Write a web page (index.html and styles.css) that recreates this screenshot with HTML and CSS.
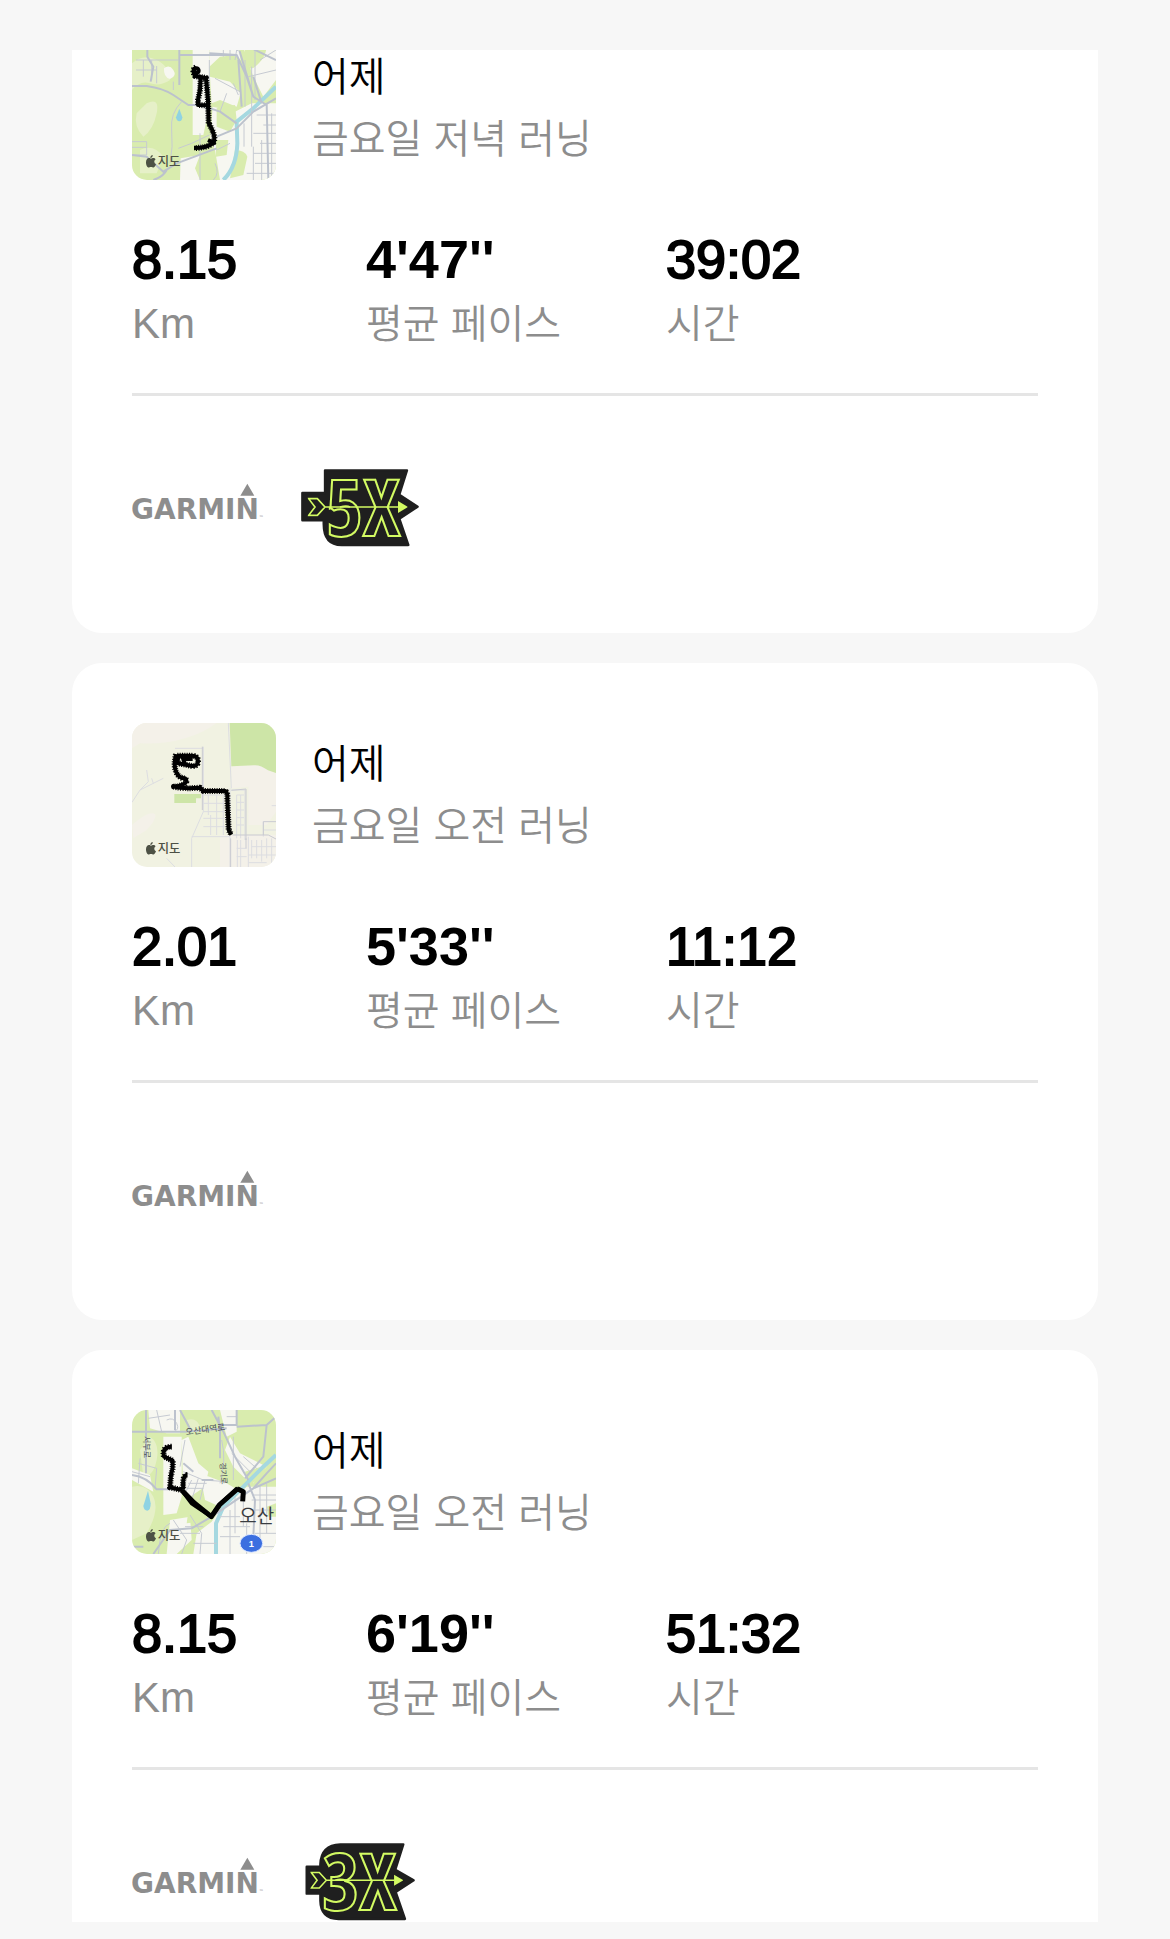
FILE: index.html
```html
<!DOCTYPE html>
<html lang="ko"><head><meta charset="utf-8"/>
<meta name="viewport" content="width=device-width, initial-scale=1.0"/>
<meta name="format-detection" content="telephone=no"/>
<title>러닝 기록</title>
<link rel="stylesheet" href="styles.css">
</head>
<body>

<svg class="defs" aria-hidden="true">
  <symbol id="apple" viewBox="0 0 30 38">
    <path d="M20 0c1 5-3 9-7 9 0-5 3-8 7-9zM15 11c2 0 4-2 7-2 3 0 5 1 7 4-6 4-5 12 1 15-2 5-5 10-8 10-3 0-4-2-7-2s-4 2-7 2C3 38 0 29 0 22 0 14 4 9 9 9c3 0 4 2 6 2z"/>
  </symbol>
  <symbol id="garmin" viewBox="36 41 396 231">
    <path d="M382 85L403 121H361Z"/>
    <text class="brand" x="33" y="190">GARMIN</text>
    <text class="tm" x="417" y="190">™</text>
  </symbol>
  <symbol id="arrow" viewBox="0 0 300 60">
    <path class="line" d="M3 6H29L52 31L29 56H3L22 31ZM52 31H272"/>
    <path class="head" d="M271 13L301 31L271 49Z"/>
  </symbol>
</svg>

<main class="feed">

  <article class="card">
    <header class="run">
      <svg class="map" viewBox="36 -12 432 432" role="img" aria-label="러닝 경로">
        <rect class="land" x="36" y="-12" width="432" height="432"/>
        <g class="pale">
          <path d="M36 70Q70 40 110 60T150 120Q120 140 90 130T36 150ZM80 190Q120 170 110 220T70 290Q40 260 50 220ZM60 330Q100 310 130 350L110 400H60Z"/>
        </g>
        <g class="city">
          <path d="M218 -12H268V200L250 285H218Z"/>
          <path d="M132 85Q148 72 160 90T150 117Q130 112 132 85Z"/>
          <path d="M268 -12H350L362 60L345 45L300 50L268 80ZM372 30L468 -12V120L430 170L400 110ZM270 110L330 125L362 160L350 200L300 180L275 190ZM278 200L345 215L395 190L468 190V420H300L285 330L270 300Z"/>
          <path d="M182 355L240 345L225 385L240 420H180Z"/>
        </g>
        <g class="land">
          <path d="M385 -12H430Q450 30 425 60T390 85L372 40ZM290 205L345 195L350 240L330 275L290 260ZM345 330Q375 330 382 350L370 405L330 415ZM288 300L325 300L320 345L288 350Z"/>
        </g>
        <path class="river" d="M468 140L400 205L350 245L352 310Q350 380 310 420"/>
        <path class="pond" d="M178 206L187 232Q186 244 178 244T168 232Z"/>
        <g class="road small">
          <path d="M48 60H175M70 60V110M95 60V120M48 90H110M110 78V130M160 125V150M268 60V200M285 115L360 155M300 215L320 160M340 130L355 165M185 185Q150 220 155 270T150 370M268 285L215 310L175 325M240 280V420M375 60V200M395 80V320M405 30V180M36 305H80V345H36M36 322H80M410 225H468M430 255H468M400 280H468M420 310H468M400 340H468M405 370H468M380 400H468M400 320V420M425 300V420M455 220V420M372 250V320M290 330L330 310M285 370Q300 400 280 420M330 -12V60M310 -12V50M350 30L345 60M420 60L468 30M385 110L468 90"/>
        </g>
        <g class="road">
          <path d="M36 138H80Q130 145 160 165T205 195H240L300 215L350 250M178 -12V135M82 -12V50L100 80L92 125M178 45H340M36 345L80 350L130 395L170 370L250 340L290 325M100 420Q130 410 140 390M268 40L350 45L380 110L400 170L440 195M345 -12L400 170M350 30L385 20L468 60M290 290L350 265L400 215L468 175M440 190L445 420M355 60L365 200M400 110L425 190"/>
        </g>
        <g class="route">
          <path d="M228 82Q214 90 225 108L258 114L264 180L266 250Q290 290 280 308Q262 324 222 324"/>
          <path d="M242 115Q242 150 234 180V195L264 196M264 300L286 310"/>
          <path class="rough" d="M228 82Q214 90 225 108L258 114L264 180L266 250Q290 290 280 308Q262 324 222 324"/>
          <path class="rough" d="M242 115Q242 150 234 180V195L264 196"/>
          <circle cx="229" cy="92" r="7"/>
        </g>
        <use class="mark" href="#apple" x="78" y="345" width="30" height="38"/>
        <text class="maptext" x="113" y="377">지도</text>
      </svg>
      <div class="info">
        <h2 class="day">어제</h2>
        <p class="name">금요일 저녁 러닝</p>
      </div>
    </header>
    <dl class="stats">
      <div><dd>8.15</dd><dt class="unit">Km</dt></div>
      <div><dd class="pace">4'47''</dd><dt>평균 페이스</dt></div>
      <div><dd>39:02</dd><dt>시간</dt></div>
    </dl>
    <footer class="marks">
      <svg class="garmin" viewBox="36 41 396 231" role="img" aria-label="GARMIN"><use href="#garmin" x="36" y="41" width="396" height="231"/></svg>
      <svg class="badge" viewBox="543 41 354 231" role="img" aria-label="5X">
        <path class="plate" d="M615 45H861L838 118L893 154L838 190L865 269H665Q611 269 611 205V195H547V113H615Z"/>
        <text x="618" y="243">5X</text>
        <path class="line" d="M629 155V163M660 155Q680 150 690 155"/>
        <use href="#arrow" x="563" y="124" width="300" height="60"/>
      </svg>
    </footer>
  </article>

  <article class="card">
    <header class="run">
      <svg class="map" viewBox="36 24 432 432" role="img" aria-label="러닝 경로">
        <rect class="field" x="36" y="24" width="432" height="432"/>
        <g class="sand">
          <path d="M36 24H290Q200 90 60 85L36 100ZM36 330Q80 290 100 295T80 345L40 370ZM334 155L420 150L468 175V290L440 330H385V215L334 220Z"/>
          <path d="M300 360H468V456H300Z"/>
        </g>
        <path class="park" d="M329 24H468V174L444 166Q420 148 400 151L334 154Z"/>
        <path class="park" d="M163 237H243V250H228V264H163Z"/>
        <g class="lane">
          <path d="M325 24L334 220M250 95V290L215 370V456M165 100H250M36 262L60 225L85 200L80 165M60 225L130 190M100 205L95 190M215 365H330M330 220V456M334 225H375V375M350 240V370M362 240V370M250 240H320M250 265H320M250 290H320M250 310H320M250 335H320M265 240V300M290 240V360M310 240V360M272 300V360M350 240H372M350 262H372M350 285H372M350 308H372M350 330H372M352 375V456M362 375V456M385 365V456M395 375V430M410 375V430M425 375V440M440 370V430M455 370V456M350 400H380M350 425H380M395 395H468M385 420H468M385 443H440M140 430L165 456M430 345H468M430 320V365M455 272H468"/>
        </g>
        <g class="lane dark">
          <path d="M334 226L378 222V375M338 360H445L468 372M430 360V320H468M332 370V456M378 370V400M247 95V285"/>
        </g>
        <g class="route">
          <path d="M172 122H218Q235 124 234 140T212 152L175 145M168 118Q160 150 168 170T195 190Q206 200 190 208T162 215Q190 222 240 218L250 228H315Q323 230 322 250L326 345L334 359"/>
          <path class="rough" d="M172 122H218Q235 124 234 140T212 152L175 145M168 118Q160 150 168 170T195 190Q206 200 190 208T162 215Q190 222 240 218L250 228H315Q323 230 322 250L326 345L334 359"/>
          <path d="M175 122L172 150M185 118L195 148M185 132H218"/>
        </g>
        <use class="mark" href="#apple" x="78" y="381" width="30" height="38"/>
        <text class="maptext" x="113" y="413">지도</text>
      </svg>
      <div class="info">
        <h2 class="day">어제</h2>
        <p class="name">금요일 오전 러닝</p>
      </div>
    </header>
    <dl class="stats">
      <div><dd>2.01</dd><dt class="unit">Km</dt></div>
      <div><dd class="pace">5'33''</dd><dt>평균 페이스</dt></div>
      <div><dd>11:12</dd><dt>시간</dt></div>
    </dl>
    <footer class="marks">
      <svg class="garmin" viewBox="36 41 396 231" role="img" aria-label="GARMIN"><use href="#garmin" x="36" y="41" width="396" height="231"/></svg>
    </footer>
  </article>

  <article class="card">
    <header class="run">
      <svg class="map" viewBox="36 30 432 432" role="img" aria-label="러닝 경로">
        <rect class="land" x="36" y="30" width="432" height="432"/>
        <g class="pale">
          <path d="M36 260Q80 250 100 290T80 400L36 420ZM90 110Q120 130 110 180T70 230L60 150ZM200 60Q230 50 240 80L215 95Z"/>
        </g>
        <g class="city">
          <path d="M85 30H180V100H140L90 85ZM130 110H185V290L170 340L130 345ZM185 120L205 110L235 190L265 215L255 260L210 290L190 270ZM300 30H350V95L320 110ZM330 110L360 160L440 200L400 250L375 235L340 200L315 150ZM240 220L320 250L345 265L300 320L255 300ZM300 330L380 260H468V462H220L230 400L275 365ZM36 205L90 225L100 275L36 240ZM150 360L210 350L215 420L170 462H140Z"/>
        </g>
        <g class="land">
          <path d="M245 130L295 125L300 205L270 210L235 180ZM375 215L440 195L430 225L385 260ZM210 300L250 320L240 365L200 370ZM440 320L468 310V350H445Z"/>
        </g>
        <path class="river" d="M468 165L430 200L380 250L310 320L288 370V462"/>
        <path class="pond" d="M84 272L92 310Q92 332 82 332T70 318Z"/>
        <g class="road small">
          <path d="M110 30L125 95M85 55L150 45M140 60Q160 50 170 70T160 95M55 190L110 205L105 265M36 215L90 230M60 175L55 250M155 180V265M190 215L250 240L320 245M215 240L195 280M235 235L215 300M255 240L240 300M205 250H260M200 265H250M195 120L180 200M320 50H350M305 120Q320 180 300 250M340 110V240M335 160L390 215M370 170L410 205M160 360L200 420L185 462M210 345L245 400L240 462M180 400H240M195 380H250M220 430H290M300 350L360 350M310 380H390M300 410H360M330 330V462M345 290V400M370 270V380M420 255V420M440 250V400M395 300H468M400 285H468M390 330H468M405 400H468M430 440H468M380 370V462M150 370Q120 380 115 462"/>
        </g>
        <g class="road">
          <path d="M36 95H195L320 85M78 30V220M36 225Q80 230 110 268H185L220 310L275 350M180 30L215 95M165 30V90M275 30L310 95L345 170L385 240M295 50L300 95V175M350 30V75L300 75M350 80L440 75L468 50M440 75L430 170L375 235M275 350L215 385L150 390L100 462M275 350L400 265L468 235M385 250L405 300L400 410M468 190L440 220L400 265M245 240L280 240M190 190L220 215M36 440H70"/>
        </g>
        <g class="route">
          <path d="M155 140Q125 140 132 170L158 182Q160 205 153 225L150 262L185 270L215 310L274 350L300 312L355 264M202 225Q186 225 190 268"/>
          <path class="rough" d="M155 140Q125 140 132 170L158 182Q160 205 153 225L150 262L185 270M202 225Q186 225 190 268"/>
          <path class="thick" d="M187 272L222 308L274 350L298 315L353 266M352 266L370 275L368 304"/>
        </g>
        <text class="street" transform="translate(198 106) rotate(-8)">오산대역로</text>
        <text class="street side" transform="translate(73 108) rotate(90)">서부로</text>
        <text class="street side" transform="translate(299 188) rotate(85)">경기로</text>
        <text class="place" x="358" y="368">오산</text>
        <ellipse class="shield" cx="394" cy="430" rx="34" ry="27"/>
        <text class="route-no" x="394" y="440">1</text>
        <use class="mark" href="#apple" x="78" y="387" width="30" height="38"/>
        <text class="maptext" x="113" y="419">지도</text>
      </svg>
      <div class="info">
        <h2 class="day">어제</h2>
        <p class="name">금요일 오전 러닝</p>
      </div>
    </header>
    <dl class="stats">
      <div><dd>8.15</dd><dt class="unit">Km</dt></div>
      <div><dd class="pace">6'19''</dd><dt>평균 페이스</dt></div>
      <div><dd>51:32</dd><dt>시간</dt></div>
    </dl>
    <footer class="marks">
      <svg class="garmin" viewBox="36 41 396 231" role="img" aria-label="GARMIN"><use href="#garmin" x="36" y="41" width="396" height="231"/></svg>
      <svg class="badge" viewBox="542 39 354 231" role="img" aria-label="3X">
        <path class="plate" d="M660 43H849L825 119L880 151L826 186L854 267H655Q601 266 600 212V191H559V110H600V103Q602 45 660 43Z"/>
        <text x="606" y="241">3X</text>
        <path class="line" d="M645 151Q660 145 676 151"/>
        <use href="#arrow" x="570" y="120" width="278" height="60"/>
      </svg>
    </footer>
  </article>

</main>

</body>
</html>
```

FILE: styles.css
```css
* {
  box-sizing: border-box;
}
body {
  margin: 0;
  padding: 50px 72px 17px;
  height: 100vh;
  background-color: #f7f7f7;
  color: #000;
  font-family: "Liberation Sans", "Noto Sans CJK KR", sans-serif;
  --sub-color: #8d8d8d;
  --lime: #d3fb63;
}
h2, p, dl, dd, dt {
  margin: 0;
}
.defs {
  display: none;
}

/* scrolled list */
.feed {
  height: 100%;
  overflow: hidden;
}
.card {
  background-color: #fff;
  border-radius: 30px;
  padding: 60px;
  margin-bottom: 30px;
}
.card:first-child {
  margin-top: -74px;
}

.run {
  display: flex;
  align-items: center;
  gap: 36px;
}
.map {
  width: 144px;
  height: 144px;
  border-radius: 15px;
  flex: none;
}
.day, .name, .stats dt {
  font-size: 40px;
  font-weight: 350;
  line-height: 62px;
}
.name, .stats dt {
  color: var(--sub-color);
}

.stats {
  display: grid;
  grid-template-columns: 39fr 50fr 62fr;
  padding: 45px 0 38px;
  border-bottom: 3px solid #e5e5e5;
}
.stats dd {
  font-size: 54px;
  line-height: 68px;
  -webkit-text-stroke: 2px #000;
}
.stats .pace {
  font-weight: bold;
  -webkit-text-stroke: 0;
}
.stats .unit {
  font-size: 42px;
}

.marks {
  display: flex;
  gap: 37px;
  padding: 73px 0 27px;
}
.garmin {
  width: 132px;
  height: 77px;
  fill: var(--sub-color);
}
.brand {
  font: bold 84px "DejaVu Sans", sans-serif;
}
.tm {
  font: 14px "DejaVu Sans", sans-serif;
}
.badge {
  width: 118px;
  height: 77px;
  overflow: visible;
}
.badge text {
  font: bold condensed 236px "Open Sans", sans-serif;
  fill: none;
  stroke: var(--lime);
  stroke-width: 6;
}
.plate {
  fill: #1f1f1f;
  stroke: #1f1f1f;
  stroke-width: 7;
  stroke-linejoin: round;
}
.line {
  fill: none;
  stroke: var(--lime);
  stroke-width: 5;
}
.head {
  fill: var(--lime);
}

/* map */
.land {
  fill: #d9ecae;
}
.pale {
  fill: #e6f0c8;
}
.city {
  fill: #f7f7f1;
}
.field {
  fill: #f1f2e2;
}
.sand {
  fill: #f4f1e9;
}
.park {
  fill: #cde5a7;
}
.pond {
  fill: #8fd3e3;
}
.river {
  fill: none;
  stroke: #a5d8e0;
  stroke-width: 12;
}
.road {
  fill: none;
  stroke: #bcc2cd;
  stroke-width: 6;
  stroke-linejoin: round;
}
.road.small {
  stroke: #c6cad2;
  stroke-width: 3;
}
.lane {
  fill: none;
  stroke: #dcdde1;
  stroke-width: 3;
}
.lane.dark {
  stroke: #c9cad1;
}
.route {
  fill: none;
  stroke: #000;
  stroke-width: 12;
  stroke-linejoin: round;
}
.route .rough {
  stroke-width: 18;
  stroke-dasharray: 3 4;
}
.route .thick {
  stroke-width: 15;
}
.mark {
  fill: #4d5145;
}
.maptext {
  font: 500 37px "Noto Sans CJK KR", sans-serif;
  fill: #4d5145;
}
.street {
  font: 400 26px "Noto Sans CJK KR", sans-serif;
  fill: #4a4f58;
}
.street.side {
  font-size: 24px;
}
.place {
  font: 400 57px "Noto Sans CJK KR", sans-serif;
  fill: #3a3d42;
}
.shield {
  fill: #3b6fe0;
  stroke: #dfe9ff;
  stroke-width: 3;
}
.route-no {
  font: bold 28px "Liberation Sans", sans-serif;
  fill: #fff;
  text-anchor: middle;
}
```
